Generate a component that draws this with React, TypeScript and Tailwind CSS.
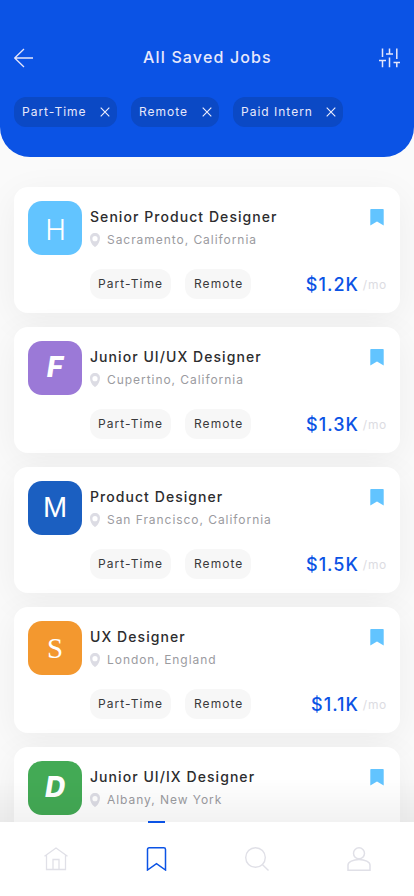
import React from 'react';

type Job = {
  title: string;
  place: string;
  pay?: string;
  letter: string;
  tile: string;
};

const jobs: Job[] = [
  { title: 'Senior Product Designer', place: 'Sacramento, California', pay: '$1.2K', letter: 'H', tile: 'bg-[#62c4ff] text-[28px] font-light pl-px pt-[3px]' },
  { title: 'Junior UI/UX Designer', place: 'Cupertino, California', pay: '$1.3K', letter: 'F', tile: 'bg-[#9b79d7] text-[28px] font-extrabold italic pb-0.5' },
  { title: 'Product Designer', place: 'San Francisco, California', pay: '$1.5K', letter: 'M', tile: "bg-[#1b5fc1] text-[29px] font-['Liberation_Sans'] pb-0.5" },
  { title: 'UX Designer', place: 'London, England', pay: '$1.1K', letter: 'S', tile: "bg-[#f3982f] text-[29px] font-['Liberation_Serif']" },
  { title: 'Junior UI/IX Designer', place: 'Albany, New York', letter: 'D', tile: 'bg-[#43aa55] text-[28px] font-extrabold italic pb-0.5' },
];

const filters = [
  { label: 'Part-Time', width: 'w-[103px]' },
  { label: 'Remote', width: 'w-[88px]' },
  { label: 'Paid Intern', width: 'w-[110px]' },
];

function JobCard({ job }: { job: Job }) {
  return (
    <article className="flex h-[126px] shrink-0 gap-2 rounded-[14px] bg-white p-3.5 shadow-[0_8px_36px_rgba(0,0,0,0.055)]">
      <div className={`flex size-[54px] shrink-0 items-center justify-center rounded-[14px] leading-none text-white ${job.tile}`}>
        {job.letter}
      </div>
      <div className="flex min-w-0 flex-1 flex-col">
        <div className="flex h-8 items-center justify-between">
          <h2 className="pb-0.5 text-[14px] font-medium tracking-[1.06px] whitespace-nowrap text-[#2c2c2e]">{job.title}</h2>
          <svg width="14" height="17" viewBox="0 0 14 17" className="mr-0.5 shrink-0" fill="#62c4ff">
            <path d="M1 0H13Q13.7 0 13.7 .8V16.6L7 12.4L.3 16.6V.8Q.3 0 1 0Z" />
          </svg>
        </div>
        <div className="flex h-3.5 items-center gap-[7px]">
          <svg width="10" height="14" viewBox="0 0 10 14" className="shrink-0">
            <path fillRule="evenodd" fill="#dcdce4" d="M5 0C2 0 0 2 0 5C0 8.5 1.8 11.6 4.2 13.6Q5 14.2 5.8 13.6C8.2 11.6 10 8.5 10 5C10 2 8 0 5 0ZM5 3.1A2.6 2.6 0 1 1 5 8.3A2.6 2.6 0 0 1 5 3.1Z" />
          </svg>
          <span className="text-[12px] tracking-[0.95px] whitespace-nowrap text-[#9b9b9f]">{job.place}</span>
        </div>
        {job.pay && (
          <div className="mt-[22px] flex h-[30px] items-center">
            <span className="flex h-[30px] w-[81px] items-center rounded-xl bg-[#f7f7f7] pl-2 text-[12px] tracking-[1.05px] text-[#39393b]">Part-Time</span>
            <span className="ml-3.5 flex h-[30px] w-[66px] items-center rounded-xl bg-[#f7f7f7] pl-[9px] text-[12px] tracking-[1.05px] text-[#39393b]">Remote</span>
            <div className="-mr-px ml-auto flex items-center gap-1 pt-0.5 leading-none">
              <span className="text-[18px] font-medium tracking-[1px] text-[#0b53e5]">{job.pay}</span>
              <span className="text-[12px] tracking-[0.7px] text-[#dcdce2]">/mo</span>
            </div>
          </div>
        )}
      </div>
    </article>
  );
}

export default function App() {
  return (
    <div className="flex h-[896px] w-[414px] flex-col overflow-hidden bg-[#fafafa] font-['Inter',sans-serif]">
      <header className="h-[157px] shrink-0 rounded-b-[30px] bg-[#0b53e5] px-3.5 pt-[42px]">
        <div className="flex h-[30px] items-center justify-between">
          <svg className="mt-0.5" width="22" height="20" viewBox="0 0 22 20" fill="none" stroke="#e6e6fa" strokeWidth="1.3">
            <path d="M.5 10H19M10 1L.7 10L10 19" />
          </svg>
          <h1 className="pl-px text-[16px] font-medium tracking-[1.15px] text-[#e8e8fb]">All Saved Jobs</h1>
          <svg className="mt-0.5" width="22" height="20" viewBox="0 0 22 20" fill="none" stroke="#e6e6fa" strokeWidth="1.5">
            <path d="M4.5 .5V9M1 12.4H8M4.5 12.4V19.2M11.5 .5V6M8 6H15M11.5 9.5V19.2M18.8 .5V11M15.5 14.4H22M18.8 14.4V19.2" />
          </svg>
        </div>
        <div className="mt-[25px] flex gap-3.5">
          {filters.map((f) => (
            <div key={f.label} className={`flex h-[30px] items-center justify-between rounded-xl bg-[#0b49c5] pr-[7px] pl-2 ${f.width}`}>
              <span className="text-[12px] tracking-[1px] whitespace-nowrap text-[#e8e8fb]">{f.label}</span>
              <svg width="10" height="10" viewBox="0 0 10 10" fill="none" stroke="#f0f0fd" strokeWidth="1.1">
                <path d="M.7 .7L9.3 9.3M9.3 .7L.7 9.3" />
              </svg>
            </div>
          ))}
        </div>
      </header>

      <main className="relative flex min-h-0 flex-1 flex-col gap-3.5 overflow-hidden px-3.5 pt-[30px]">
        {jobs.map((job) => (
          <JobCard key={job.title} job={job} />
        ))}
        <div className="pointer-events-none absolute inset-x-0 bottom-0 h-[44px] border-b border-black/5 bg-linear-to-b from-black/0 to-black/5" />
      </main>

      <nav className="relative flex h-[74px] shrink-0 justify-between bg-white pt-[25px] pr-[43px] pl-11">
        <div className="absolute -top-px left-[148px] h-0.5 w-[17px] bg-[#0b53e5]" />
        <svg width="24" height="24" viewBox="0 0 24 24" fill="none" stroke="#e0e0e7" strokeWidth="1.3">
          <path d="M.5 9.3L12 1L23.5 9.3M2.5 8.3V22.5H21.5V8.3M9 22V12.5H15V22" />
        </svg>
        <svg className="-translate-x-[0.5px]" width="24" height="24" viewBox="0 0 24 24" fill="none" stroke="#0b53e5" strokeWidth="1.5">
          <path d="M3 23V2.5Q3 .8 4.7 .8H19.3Q21 .8 21 2.5V23L12 16.7Z" />
        </svg>
        <svg className="-translate-x-px" width="24" height="24" viewBox="0 0 24 24" fill="none" stroke="#e0e0e7" strokeWidth="1.4">
          <circle cx="10.5" cy="10.5" r="9.8" />
          <path d="M17.3 17.5L23.5 23.5" />
        </svg>
        <svg width="24" height="24" viewBox="0 0 24 24" fill="none" stroke="#e0e0e7" strokeWidth="1.5">
          <circle cx="12" cy="6.3" r="5.5" />
          <path d="M1 23.2V18C1 15.2 6 12.5 12 12.5S23 15.2 23 18V23.2Z" />
        </svg>
      </nav>
    </div>
  );
}
